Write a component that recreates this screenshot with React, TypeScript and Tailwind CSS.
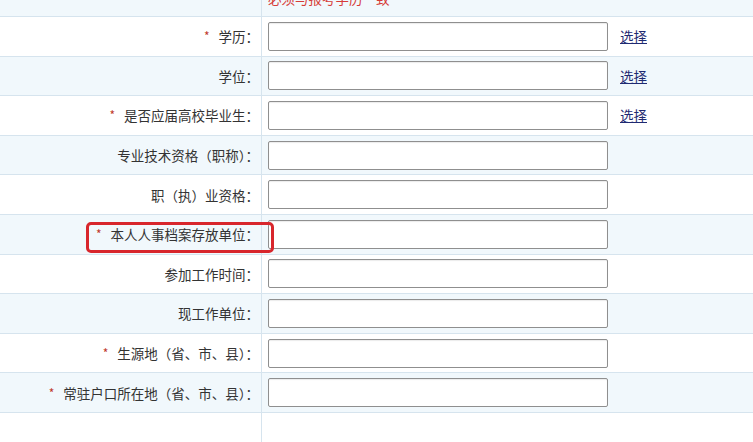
import React from "react";

type Row = { label: string; required?: boolean; pick?: boolean; mark?: boolean };

const rows: Row[] = [
  { label: "学历：", required: true, pick: true },
  { label: "学位：", pick: true },
  { label: "是否应届高校毕业生：", required: true, pick: true },
  { label: "专业技术资格（职称）：" },
  { label: "职（执）业资格：" },
  { label: "本人人事档案存放单位：", required: true, mark: true },
  { label: "参加工作时间：" },
  { label: "现工作单位：" },
  { label: "生源地（省、市、县）：", required: true },
  { label: "常驻户口所在地（省、市、县）：", required: true },
];

export default function App() {
  return (
    <div
      className="h-[442px] w-[753px] overflow-hidden bg-white text-[13.5px] text-[#333]"
      style={{ fontFamily: '"Noto Sans CJK SC", "Noto Sans", sans-serif' }}
    >
      {/* tail of the previous row, cut off at the top */}
      <div className="flex h-[17px] border-b border-[#d6e4ee] bg-[#f1f8fc]">
        <div className="w-[262px] shrink-0 border-r border-[#d6e4ee]" />
        <div className="overflow-hidden pl-[6px]">
          <div className="-mt-[12px] leading-[20px] text-[#d63c38]">必须与报考学历一致</div>
        </div>
      </div>

      {rows.map((r, i) => (
        <div
          key={r.label}
          className={`relative flex h-[39.6px] border-b border-[#d6e4ee] ${
            i % 2 === 1 ? "bg-[#f1f8fc]" : "bg-white"
          }`}
        >
          <div className="flex w-[262px] shrink-0 items-center justify-end border-r border-[#d6e4ee] pr-[2px]">
            {r.required && <span className="mr-[9px] text-[12px] text-[#c0392b]">*</span>}
            <span>{r.label}</span>
          </div>
          <div className="flex items-center pl-[6px]">
            <div className="h-[29px] w-[340px] rounded-[2px] border border-[#8f8f8f] bg-white shadow-[inset_0_1px_1px_rgba(0,0,0,0.08)]" />
            {r.pick && (
              <a href="#" className="ml-[12px] text-[13.5px] text-[#1f2a72] underline">
                选择
              </a>
            )}
          </div>
          {r.mark && (
            <div className="absolute left-[86px] top-[7px] h-[31px] w-[188px] rounded-[5px] border-[3px] border-[#d8262c]" />
          )}
        </div>
      ))}

      <div className="flex h-[40px]">
        <div className="w-[262px] shrink-0 border-r border-[#d6e4ee]" />
      </div>
    </div>
  );
}
